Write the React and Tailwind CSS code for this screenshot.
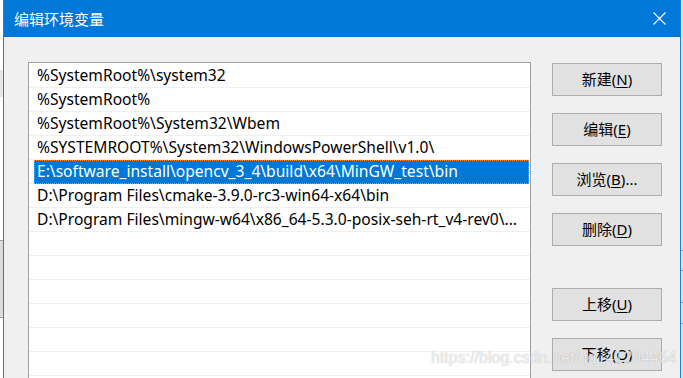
import React from "react";

const rows = [
  "%SystemRoot%\\system32",
  "%SystemRoot%",
  "%SystemRoot%\\System32\\Wbem",
  "%SYSTEMROOT%\\System32\\WindowsPowerShell\\v1.0\\",
  "E:\\software_install\\opencv_3_4\\build\\x64\\MinGW_test\\bin",
  "D:\\Program Files\\cmake-3.9.0-rc3-win64-x64\\bin",
  "D:\\Program Files\\mingw-w64\\x86_64-5.3.0-posix-seh-rt_v4-rev0\\...",
  "",
  "",
  "",
  "",
  "",
  "",
  "",
];

const SELECTED = 4;

function Btn({ label, k, tail = "" }) {
  return (
    <div className="w-[110px] h-[33px] border border-[#adadad] bg-[#e1e1e1] flex items-center justify-center text-[15px] leading-none text-black">
      <span>
        {label}(<span className="underline underline-offset-2 decoration-1">{k}</span>){tail}
      </span>
    </div>
  );
}

export default function App() {
  return (
    <div
      className="relative flex w-[683px] h-[378px] overflow-hidden bg-white"
      style={{ fontFamily: '"Noto Sans", "Noto Sans CJK SC", sans-serif' }}
    >
      {/* background window strip left */}
      <div className="w-[3px] h-full flex flex-col bg-white">
        <div className="h-[70px]" />
        <div className="h-[27px] bg-[#e6e6e6]" />
        <div className="h-[143px]" />
        <div className="h-[78px] bg-[#dcdcdc] border-y border-[#a0a0a0]" />
        <div className="flex-1" />
      </div>

      {/* dialog */}
      <div className="w-[678px] h-full flex flex-col border-x border-[#1883d7] bg-[#f0f0f0]">
        <div className="h-[37px] shrink-0 bg-[#0078d7] flex items-center justify-between pl-[10px] pr-[14px]">
          <span
            className="text-[15px] leading-none text-white"
            style={{ fontFamily: '"Noto Sans CJK SC", sans-serif' }}
          >
            编辑环境变量
          </span>
          <svg width="13" height="13" viewBox="0 0 13 13" className="block">
            <path d="M0.5 0.5 L12.5 12.5 M12.5 0.5 L0.5 12.5" stroke="#ffffff" strokeWidth="1.1" fill="none" />
          </svg>
        </div>

        <div className="flex flex-1 overflow-hidden pt-[25px] pl-[24px] gap-[21px]">
          <div className="w-[503px] h-[340px] shrink-0 border border-[#a0a0a0] bg-white pt-px overflow-hidden">
            {rows.map((r, i) => (
              <div
                key={i}
                className="h-[24px] border-b border-[#f0f0f0] flex"
              >
                {i === SELECTED ? (
                  <div className="ml-[5px] mr-px flex-1 h-[24px] bg-[#0078d7] outline outline-1 outline-dotted outline-[#ff8728] -outline-offset-1 flex items-center pl-[3px] text-[15.6px] leading-none text-white whitespace-nowrap">
                    {r}
                  </div>
                ) : (
                  <div className="ml-[5px] flex-1 flex items-center pl-[3px] text-[15.6px] leading-none text-black whitespace-nowrap">
                    {r}
                  </div>
                )}
              </div>
            ))}
          </div>

          <div className="flex flex-col pt-px">
            <div className="flex flex-col gap-[17px]">
              <Btn label="新建" k="N" />
              <Btn label="编辑" k="E" />
              <Btn label="浏览" k="B" tail="..." />
              <Btn label="删除" k="D" />
            </div>
            <div className="flex flex-col gap-[17px] mt-[42px]">
              <Btn label="上移" k="U" />
              <Btn label="下移" k="O" />
            </div>
          </div>
        </div>
      </div>

      {/* background window strip right */}
      <div className="w-[2px] h-full flex flex-col bg-[#e3e3e3]">
        <div className="h-[250px]" />
        <div className="h-px bg-[#9a9a9a]" />
        <div className="h-[19px]" />
        <div className="h-px bg-[#9a9a9a]" />
        <div className="h-[31px]" />
        <div className="h-px bg-[#9a9a9a]" />
        <div className="h-[20px]" />
        <div className="h-px bg-[#9a9a9a]" />
        <div className="flex-1" />
      </div>

      {/* watermark */}
      <div
        className="absolute left-[431px] top-[350px] text-[16px] leading-none text-white/80 whitespace-nowrap [text-shadow:0_0_1px_rgba(0,0,0,0.35)]"
        style={{ fontFamily: '"Liberation Sans", Arial, sans-serif' }}
      >
        https://blog.csdn.net/qq_41204464
      </div>
    </div>
  );
}
